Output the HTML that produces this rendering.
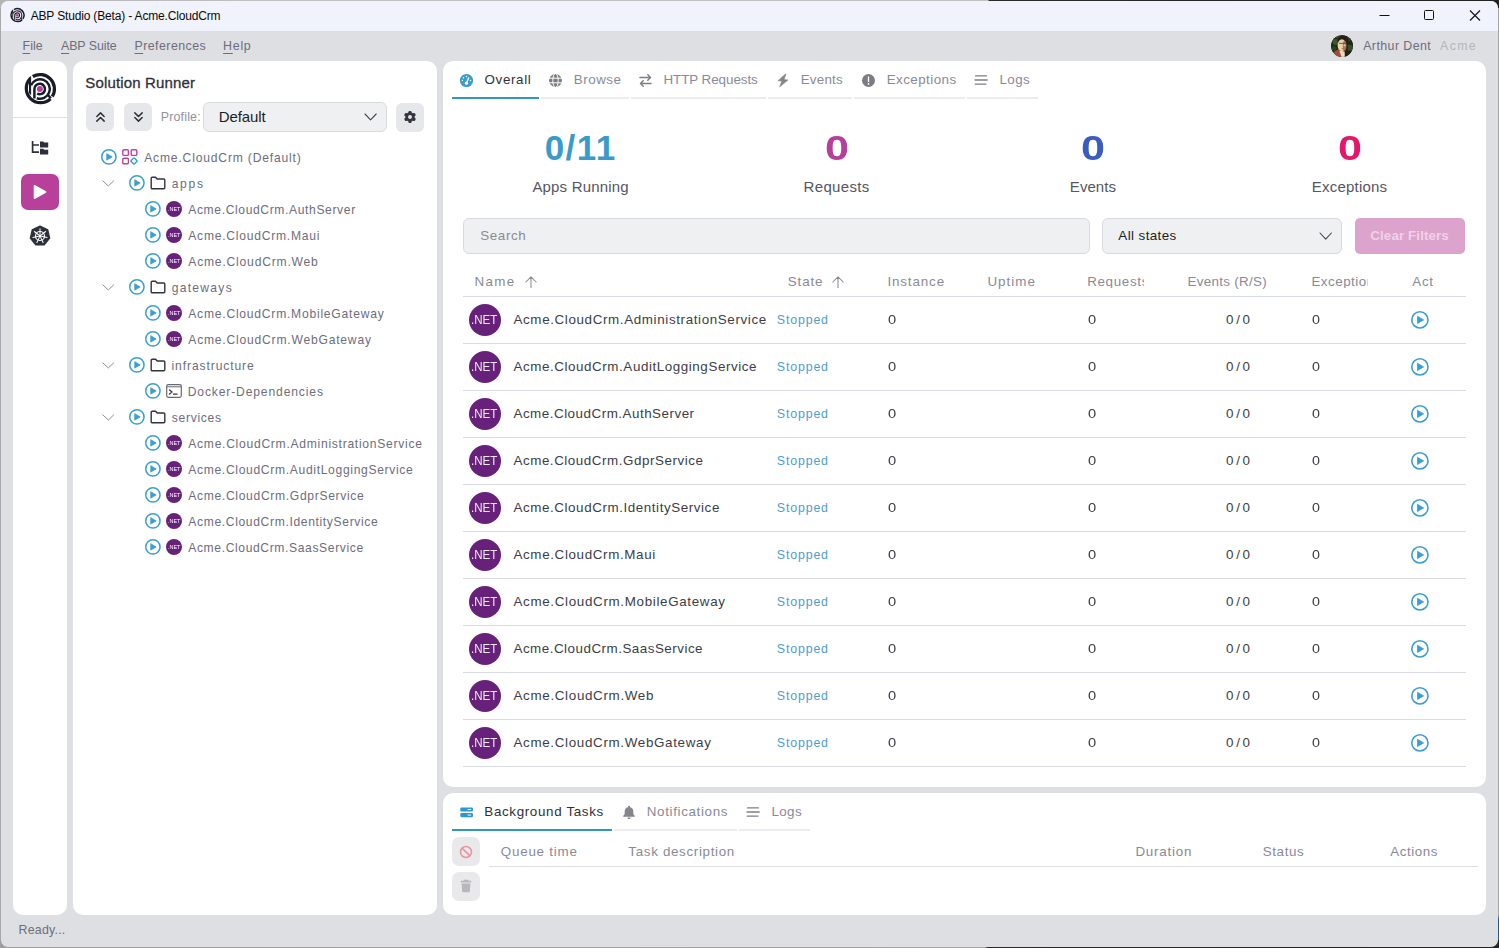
<!DOCTYPE html>
<html lang="en"><head><meta charset="utf-8"><title>ABP Studio (Beta) - Acme.CloudCrm</title>
<style>
*{box-sizing:border-box;margin:0;padding:0}
html,body{width:1499px;height:948px;overflow:hidden;background:#9c9c9f}
body{font-family:"Liberation Sans",sans-serif;color:#6d6d7c;position:relative}
.frame{position:absolute;left:0;top:0;width:1499px;height:948px;background:linear-gradient(90deg,#b4b4b6 0,#c2c2c4 20%,#c2c2c4 65.9%,#2a2a2c 66%,#222 100%) top/100% 8px no-repeat,linear-gradient(90deg,#9e9ea1 0,#a3a3a6 65.7%,#2a2a2c 65.9%,#242426 100%) bottom/100% 8px no-repeat,linear-gradient(180deg,#a5a5a8 0,#a5a5a8 96.5%,#1c5b8c 97%,#1c5b8c 99.2%,#2c2c2e 100%) right/8px 100% no-repeat,#a9a9ac}
.win{position:absolute;left:1px;top:1px;width:1497px;height:946px;background:#dedfe3;border-radius:7px;overflow:hidden}
.inner{position:absolute;left:-1px;top:-1px;width:1499px;height:948px}
.abs{position:absolute}
.t{position:absolute;white-space:nowrap;line-height:1}
.titlebar{position:absolute;left:0;top:0;width:1499px;height:31px;background:#f0f3fb}
.panel{position:absolute;background:#fff;border-radius:10px}
.menu{font-size:13px;color:#6d6d7c;letter-spacing:.3px}
.mu::first-letter{text-decoration:underline;text-underline-offset:3px;text-decoration-thickness:1px}
.tree{font-size:13px;color:#6d6d7c;letter-spacing:.24px}
.row{font-size:14px;color:#3f3f49;letter-spacing:.31px}
.th{font-size:14px;color:#8a8a97;letter-spacing:.31px}
.btn{position:absolute;background:#e6e7ea;border-radius:5px}
.sel{position:absolute;background:#eff0f2;border:1px solid #d8d9de;border-radius:6px}
.hline{position:absolute;height:1px;background:#d9dbe3}
.tab{font-size:14px;letter-spacing:.31px;color:#8a8a97}
.tabline{position:absolute;height:2px;background:#ececf0}
</style></head>
<body>
<div class="frame"></div><div class="win"><div class="inner">
<div class="titlebar"></div>
<svg class="abs" style="left:8.90px;top:6.70px" width="16.6" height="16.6" viewBox="-18 -18 36 36"><g fill="none" stroke="#1a1c27" stroke-linecap="butt"><path d="M-7.2,-12.5 A14.4,14.4 0 0 1 12.3,7.5" stroke-width="3.2"/><path d="M10.5,9.85 A14.4,14.4 0 0 1 -9.9,-10.45" stroke-width="3.2"/><path d="M7.9,6.0 L10.9,9.3" stroke-width="2.4"/><path d="M-9.0,-3.7 A9.75,9.75 0 1 1 -3.2,9.2" stroke-width="2.5"/><path d="M-5.6,9.6 V0 A5.3,5.3 0 1 1 -2.8,4.7" stroke-width="2.5"/></g><path d="M-11.0,-11.4 L-8.9,-13.1 L-8.9,6.3 L-11.0,4.0 Z" fill="#1a1c27"/><circle cx="-0.1" cy="0" r="3.0" fill="#b8409e"/></svg>
<div class="t" style="left:30.68px;top:10.10px;font-size:12px;color:#0a0a0a;letter-spacing:-0.165px;">ABP Studio (Beta) - Acme.CloudCrm</div>
<svg class="abs" style="left:1370px;top:0" width="129" height="31" viewBox="0 0 129 31"><path d="M9.5,15.5 h10" stroke="#111" stroke-width="1"/><rect x="54.5" y="10.5" width="9" height="9" rx="1" fill="none" stroke="#111" stroke-width="1"/><path d="M100,10.5 L110,20.5 M110,10.5 L100,20.5" stroke="#111" stroke-width="1.1"/></svg>
<div class="t mu" style="left:22.49px;top:40.30px;font-size:12.4px;color:#6d6d7c;letter-spacing:0.098px;">File</div>
<div class="t mu" style="left:60.97px;top:40.30px;font-size:12.4px;color:#6d6d7c;letter-spacing:-0.075px;">ABP Suite</div>
<div class="t mu" style="left:134.49px;top:40.30px;font-size:12.4px;color:#6d6d7c;letter-spacing:0.447px;">Preferences</div>
<div class="t mu" style="left:223.09px;top:40.30px;font-size:12.4px;color:#6d6d7c;letter-spacing:0.725px;">Help</div>
<svg class="abs" style="left:1330px;top:34px" width="24" height="24" viewBox="-12.05 -12.05 24 24"><defs><clipPath id="avc"><circle r="10.9"/></clipPath><filter id="avb" x="-20%" y="-20%" width="140%" height="140%"><feGaussianBlur stdDeviation="0.55"/></filter></defs><circle r="10.9" fill="#1f2b16"/><g clip-path="url(#avc)"><g filter="url(#avb)"><rect x="-12" y="-12" width="24" height="24" fill="#1d2914"/><circle cx="-6.5" cy="-4" r="3" fill="#3a5a2c"/><circle cx="7.5" cy="2" r="3.4" fill="#34502a"/><circle cx="-3.5" cy="-9" r="2.4" fill="#35522a"/><circle cx="6" cy="-7" r="2.5" fill="#2c4522"/><circle cx="-8" cy="2.5" r="2.5" fill="#2a4020"/><ellipse cx="0.8" cy="-5.6" rx="5.6" ry="4.8" fill="#2b1d15"/><path d="M4,-4 Q6.5,0 5.5,6 L3,6 Z" fill="#2b1d15"/><path d="M3,5 L9,4.5 L9,12 L2.5,12 Z" fill="#2a1c1a"/><path d="M-10,7 L-3.2,3 L0,12 L-8,12 Z" fill="#a5483a"/><path d="M-2.8,4.5 L2.6,5.5 L2.8,12 L-0.3,12 Z" fill="#e8dcb8"/><ellipse cx="-0.2" cy="-0.9" rx="4.2" ry="6" fill="#e6d2ab"/><ellipse cx="2.6" cy="-0.2" rx="1.9" ry="5.2" fill="#9a6a52" opacity=".85"/><ellipse cx="2.6" cy="-0.8" rx="0.9" ry="1.2" fill="#e0b9a0"/><path d="M-3,-2.7 H4" stroke="#6a4632" stroke-width="0.9"/><ellipse cx="0.6" cy="2.5" rx="1.1" ry="0.6" fill="#c4624c"/></g></g></svg>
<div class="t" style="left:1363.17px;top:40.30px;font-size:12.4px;color:#6d6d7c;letter-spacing:0.425px;">Arthur Dent</div>
<div class="t" style="left:1440.07px;top:40.30px;font-size:12.4px;color:#b4b5be;letter-spacing:1.305px;">Acme</div>
<div class="panel" style="left:13px;top:61px;width:54px;height:854px"></div>
<div class="hline" style="left:13px;top:117px;width:54px;background:#dcdde3"></div>
<svg class="abs" style="left:22.04px;top:70.90px" width="36" height="36" viewBox="-18 -18 36 36"><g fill="none" stroke="#1a1c27" stroke-linecap="butt"><path d="M-7.2,-12.5 A14.4,14.4 0 0 1 12.3,7.5" stroke-width="3.2"/><path d="M10.5,9.85 A14.4,14.4 0 0 1 -9.9,-10.45" stroke-width="3.2"/><path d="M7.9,6.0 L10.9,9.3" stroke-width="2.4"/><path d="M-9.0,-3.7 A9.75,9.75 0 1 1 -3.2,9.2" stroke-width="2.5"/><path d="M-5.6,9.6 V0 A5.3,5.3 0 1 1 -2.8,4.7" stroke-width="2.5"/></g><path d="M-11.0,-11.4 L-8.9,-13.1 L-8.9,6.3 L-11.0,4.0 Z" fill="#1a1c27"/><circle cx="-0.1" cy="0" r="3.0" fill="#b8409e"/></svg>
<svg class="abs" style="left:31px;top:140px" width="18" height="16" viewBox="0 0 18 16"><path d="M1.6,1 V12.2 H8 M1.6,5 H8" fill="none" stroke="#2d2f3a" stroke-width="1.7"/><path d="M9,1.6 h3.2 l1,1 h4 v4.8 h-8.2 z" fill="#2d2f3a"/><path d="M9,8.8 h3.2 l1,1 h4 v4.8 h-8.2 z" fill="#2d2f3a"/></svg>
<div class="abs" style="left:21px;top:174px;width:38px;height:36px;border-radius:7px;background:#b8409a"></div>
<svg class="abs" style="left:33px;top:184px" width="14" height="16" viewBox="0 0 14 16"><path d="M1.5,1.8 L12.5,8 L1.5,14.2 Z" fill="#fff" stroke="#fff" stroke-width="1.6" stroke-linejoin="round"/></svg>
<svg class="abs" style="left:29px;top:225px" width="22" height="22" viewBox="-11 -11 22 22"><path d="M0,-10 L7.8,-6.2 L9.7,2.2 L4.3,9 L-4.3,9 L-9.7,2.2 L-7.8,-6.2 Z" fill="#2d303b" stroke="#2d303b" stroke-width="1.2" stroke-linejoin="round"/><circle r="4.5" fill="none" stroke="#fff" stroke-width="1.2"/><g stroke="#fff" stroke-width="1" stroke-linecap="round"><path d="M0,-1.6 V-7.2" transform="rotate(0.0)"/><path d="M0,-1.6 V-7.2" transform="rotate(51.4)"/><path d="M0,-1.6 V-7.2" transform="rotate(102.9)"/><path d="M0,-1.6 V-7.2" transform="rotate(154.3)"/><path d="M0,-1.6 V-7.2" transform="rotate(205.7)"/><path d="M0,-1.6 V-7.2" transform="rotate(257.1)"/><path d="M0,-1.6 V-7.2" transform="rotate(308.6)"/></g><circle r="1.3" fill="#fff"/></svg>
<div class="panel" style="left:73px;top:61px;width:364px;height:854px"></div>
<div class="t" style="left:85.32px;top:74.90px;font-size:15px;color:#2f3039;letter-spacing:0.150px;-webkit-text-stroke:0.3px #2f3039;">Solution Runner</div>
<div class="btn" style="left:85.5px;top:102.6px;width:28.8px;height:28.8px;border-radius:6px"></div>
<div class="btn" style="left:123.6px;top:102.6px;width:28.8px;height:28.8px;border-radius:6px"></div>
<svg class="abs" style="left:94.9px;top:110.7px" width="11" height="12" viewBox="0 0 12 13"><path d="M2,6 L6,2 L10,6 M2,11 L6,7 L10,11" fill="none" stroke="#2d2f3a" stroke-width="1.6" stroke-linecap="round" stroke-linejoin="round"/></svg>
<svg class="abs" style="left:132.8px;top:111.1px" width="11" height="12" viewBox="0 0 12 13"><path d="M2,2 L6,6 L10,2 M2,7 L6,11 L10,7" fill="none" stroke="#2d2f3a" stroke-width="1.6" stroke-linecap="round" stroke-linejoin="round"/></svg>
<div class="t" style="left:160.69px;top:111.20px;font-size:12.4px;color:#92929d;letter-spacing:0.194px;">Profile:</div>
<div class="sel" style="left:203px;top:102px;width:184px;height:29.5px"></div>
<div class="t" style="left:218.70px;top:108.50px;font-size:15px;color:#1d1d25;letter-spacing:-0.109px;">Default</div>
<svg class="abs" style="left:364.29999999999995px;top:112.75px" width="13.2" height="7.9" viewBox="-1 -1 13.2 7.9"><path d="M0,0 L5.6,5.9 L11.2,0" fill="none" stroke="#45464f" stroke-width="1.1" stroke-linecap="round" stroke-linejoin="round"/></svg>
<div class="btn" style="left:395.6px;top:102.5px;width:28.8px;height:29px;border-radius:6px"></div>
<svg class="abs" style="left:402.9px;top:110px" width="14" height="14" viewBox="-7 -7 14 14"><g fill="#33353f"><rect x="-1.6" y="-6.1" width="3.2" height="3.4" rx="1.1" transform="rotate(0)"/><rect x="-1.6" y="-6.1" width="3.2" height="3.4" rx="1.1" transform="rotate(60)"/><rect x="-1.6" y="-6.1" width="3.2" height="3.4" rx="1.1" transform="rotate(120)"/><rect x="-1.6" y="-6.1" width="3.2" height="3.4" rx="1.1" transform="rotate(180)"/><rect x="-1.6" y="-6.1" width="3.2" height="3.4" rx="1.1" transform="rotate(240)"/><rect x="-1.6" y="-6.1" width="3.2" height="3.4" rx="1.1" transform="rotate(300)"/></g><circle r="3.3" fill="none" stroke="#33353f" stroke-width="2.7"/></svg>
<svg class="abs" style="left:99.90px;top:148.10px" width="17.80" height="17.80" viewBox="-8.90 -8.90 17.80 17.80"><circle r="7.15" fill="none" stroke="#3a9fd0" stroke-width="1.5"/><path d="M-2.15,-3.20 L3.30,0 L-2.15,3.20 Z" fill="#3a9fd0" stroke="#3a9fd0" stroke-width="0.8" stroke-linejoin="round"/></svg>
<svg class="abs" style="left:122px;top:149px" width="16" height="16" viewBox="0 0 16 16"><rect x="0.8" y="0.8" width="5.6" height="5.6" rx="1" fill="none" stroke="#c2409f" stroke-width="1.4"/><rect x="9.2" y="0.8" width="5.6" height="5.6" rx="1" fill="none" stroke="#c2409f" stroke-width="1.4"/><rect x="0.8" y="9.2" width="5.6" height="5.6" rx="1" fill="none" stroke="#c2409f" stroke-width="1.4"/><rect x="9.6" y="9.6" width="4.8" height="4.8" rx="0.8" transform="rotate(45 12 12)" fill="none" stroke="#3a9fd0" stroke-width="1.4"/></svg>
<div class="t" style="left:144.17px;top:151.50px;font-size:12.1px;color:#6d6d7c;letter-spacing:0.829px;">Acme.CloudCrm (Default)</div>
<svg class="abs" style="left:101.60000000000001px;top:179.7px" width="12.6" height="7.0" viewBox="-1 -1 12.6 7.0"><path d="M0,0 L5.3,5.0 L10.6,0" fill="none" stroke="#8e8e96" stroke-width="1.0" stroke-linecap="round" stroke-linejoin="round"/></svg>
<svg class="abs" style="left:128.00px;top:174.10px" width="17.80" height="17.80" viewBox="-8.90 -8.90 17.80 17.80"><circle r="7.15" fill="none" stroke="#3a9fd0" stroke-width="1.5"/><path d="M-2.15,-3.20 L3.30,0 L-2.15,3.20 Z" fill="#3a9fd0" stroke="#3a9fd0" stroke-width="0.8" stroke-linejoin="round"/></svg>
<svg class="abs" style="left:149.9px;top:176.1px" width="16" height="14" viewBox="0 0 16 14"><path d="M1.2,2.2 a1,1 0 0 1 1,-1 h3.4 l1.6,1.8 h6.6 a1,1 0 0 1 1,1 v7.8 a1,1 0 0 1 -1,1 h-11.6 a1,1 0 0 1 -1,-1 z" fill="none" stroke="#33333b" stroke-width="1.4" stroke-linejoin="round"/></svg>
<div class="t" style="left:171.66px;top:177.50px;font-size:12.1px;color:#6d6d7c;letter-spacing:1.695px;">apps</div>
<svg class="abs" style="left:144.10px;top:200.10px" width="17.80" height="17.80" viewBox="-8.90 -8.90 17.80 17.80"><circle r="7.15" fill="none" stroke="#3a9fd0" stroke-width="1.5"/><path d="M-2.15,-3.20 L3.30,0 L-2.15,3.20 Z" fill="#3a9fd0" stroke="#3a9fd0" stroke-width="0.8" stroke-linejoin="round"/></svg>
<div class="abs" style="left:166px;top:201px;width:16px;height:16px;border-radius:50%;background:#68217a"></div>
<div class="t" style="left:167.67px;top:206.85px;font-size:5.9px;color:#fff;letter-spacing:0.000px;transform:scaleX(0.926);transform-origin:0 50%;">.NET</div>

<div class="t" style="left:188.27px;top:203.50px;font-size:12.1px;color:#6d6d7c;letter-spacing:0.623px;">Acme.CloudCrm.AuthServer</div>
<svg class="abs" style="left:144.10px;top:226.10px" width="17.80" height="17.80" viewBox="-8.90 -8.90 17.80 17.80"><circle r="7.15" fill="none" stroke="#3a9fd0" stroke-width="1.5"/><path d="M-2.15,-3.20 L3.30,0 L-2.15,3.20 Z" fill="#3a9fd0" stroke="#3a9fd0" stroke-width="0.8" stroke-linejoin="round"/></svg>
<div class="abs" style="left:166px;top:227px;width:16px;height:16px;border-radius:50%;background:#68217a"></div>
<div class="t" style="left:167.67px;top:232.85px;font-size:5.9px;color:#fff;letter-spacing:0.000px;transform:scaleX(0.926);transform-origin:0 50%;">.NET</div>

<div class="t" style="left:188.27px;top:229.50px;font-size:12.1px;color:#6d6d7c;letter-spacing:0.759px;">Acme.CloudCrm.Maui</div>
<svg class="abs" style="left:144.10px;top:252.10px" width="17.80" height="17.80" viewBox="-8.90 -8.90 17.80 17.80"><circle r="7.15" fill="none" stroke="#3a9fd0" stroke-width="1.5"/><path d="M-2.15,-3.20 L3.30,0 L-2.15,3.20 Z" fill="#3a9fd0" stroke="#3a9fd0" stroke-width="0.8" stroke-linejoin="round"/></svg>
<div class="abs" style="left:166px;top:253px;width:16px;height:16px;border-radius:50%;background:#68217a"></div>
<div class="t" style="left:167.67px;top:258.85px;font-size:5.9px;color:#fff;letter-spacing:0.000px;transform:scaleX(0.926);transform-origin:0 50%;">.NET</div>

<div class="t" style="left:188.27px;top:255.50px;font-size:12.1px;color:#6d6d7c;letter-spacing:0.804px;">Acme.CloudCrm.Web</div>
<svg class="abs" style="left:101.60000000000001px;top:283.7px" width="12.6" height="7.0" viewBox="-1 -1 12.6 7.0"><path d="M0,0 L5.3,5.0 L10.6,0" fill="none" stroke="#8e8e96" stroke-width="1.0" stroke-linecap="round" stroke-linejoin="round"/></svg>
<svg class="abs" style="left:128.00px;top:278.10px" width="17.80" height="17.80" viewBox="-8.90 -8.90 17.80 17.80"><circle r="7.15" fill="none" stroke="#3a9fd0" stroke-width="1.5"/><path d="M-2.15,-3.20 L3.30,0 L-2.15,3.20 Z" fill="#3a9fd0" stroke="#3a9fd0" stroke-width="0.8" stroke-linejoin="round"/></svg>
<svg class="abs" style="left:149.9px;top:280.1px" width="16" height="14" viewBox="0 0 16 14"><path d="M1.2,2.2 a1,1 0 0 1 1,-1 h3.4 l1.6,1.8 h6.6 a1,1 0 0 1 1,1 v7.8 a1,1 0 0 1 -1,1 h-11.6 a1,1 0 0 1 -1,-1 z" fill="none" stroke="#33333b" stroke-width="1.4" stroke-linejoin="round"/></svg>
<div class="t" style="left:171.67px;top:281.50px;font-size:12.1px;color:#6d6d7c;letter-spacing:1.280px;">gateways</div>
<svg class="abs" style="left:144.10px;top:304.10px" width="17.80" height="17.80" viewBox="-8.90 -8.90 17.80 17.80"><circle r="7.15" fill="none" stroke="#3a9fd0" stroke-width="1.5"/><path d="M-2.15,-3.20 L3.30,0 L-2.15,3.20 Z" fill="#3a9fd0" stroke="#3a9fd0" stroke-width="0.8" stroke-linejoin="round"/></svg>
<div class="abs" style="left:166px;top:305px;width:16px;height:16px;border-radius:50%;background:#68217a"></div>
<div class="t" style="left:167.67px;top:310.85px;font-size:5.9px;color:#fff;letter-spacing:0.000px;transform:scaleX(0.926);transform-origin:0 50%;">.NET</div>

<div class="t" style="left:188.27px;top:307.50px;font-size:12.1px;color:#6d6d7c;letter-spacing:0.769px;">Acme.CloudCrm.MobileGateway</div>
<svg class="abs" style="left:144.10px;top:330.10px" width="17.80" height="17.80" viewBox="-8.90 -8.90 17.80 17.80"><circle r="7.15" fill="none" stroke="#3a9fd0" stroke-width="1.5"/><path d="M-2.15,-3.20 L3.30,0 L-2.15,3.20 Z" fill="#3a9fd0" stroke="#3a9fd0" stroke-width="0.8" stroke-linejoin="round"/></svg>
<div class="abs" style="left:166px;top:331px;width:16px;height:16px;border-radius:50%;background:#68217a"></div>
<div class="t" style="left:167.67px;top:336.85px;font-size:5.9px;color:#fff;letter-spacing:0.000px;transform:scaleX(0.926);transform-origin:0 50%;">.NET</div>

<div class="t" style="left:188.27px;top:333.50px;font-size:12.1px;color:#6d6d7c;letter-spacing:0.794px;">Acme.CloudCrm.WebGateway</div>
<svg class="abs" style="left:101.60000000000001px;top:361.7px" width="12.6" height="7.0" viewBox="-1 -1 12.6 7.0"><path d="M0,0 L5.3,5.0 L10.6,0" fill="none" stroke="#8e8e96" stroke-width="1.0" stroke-linecap="round" stroke-linejoin="round"/></svg>
<svg class="abs" style="left:128.00px;top:356.10px" width="17.80" height="17.80" viewBox="-8.90 -8.90 17.80 17.80"><circle r="7.15" fill="none" stroke="#3a9fd0" stroke-width="1.5"/><path d="M-2.15,-3.20 L3.30,0 L-2.15,3.20 Z" fill="#3a9fd0" stroke="#3a9fd0" stroke-width="0.8" stroke-linejoin="round"/></svg>
<svg class="abs" style="left:149.9px;top:358.1px" width="16" height="14" viewBox="0 0 16 14"><path d="M1.2,2.2 a1,1 0 0 1 1,-1 h3.4 l1.6,1.8 h6.6 a1,1 0 0 1 1,1 v7.8 a1,1 0 0 1 -1,1 h-11.6 a1,1 0 0 1 -1,-1 z" fill="none" stroke="#33333b" stroke-width="1.4" stroke-linejoin="round"/></svg>
<div class="t" style="left:171.50px;top:359.50px;font-size:12.1px;color:#6d6d7c;letter-spacing:0.898px;">infrastructure</div>
<svg class="abs" style="left:144.10px;top:382.10px" width="17.80" height="17.80" viewBox="-8.90 -8.90 17.80 17.80"><circle r="7.15" fill="none" stroke="#3a9fd0" stroke-width="1.5"/><path d="M-2.15,-3.20 L3.30,0 L-2.15,3.20 Z" fill="#3a9fd0" stroke="#3a9fd0" stroke-width="0.8" stroke-linejoin="round"/></svg>
<svg class="abs" style="left:166px;top:383.8px" width="16" height="14" viewBox="0 0 16 14"><rect x="0.7" y="0.7" width="14.6" height="12.6" rx="1.5" fill="none" stroke="#6a6a72" stroke-width="1.2"/><path d="M0.7,2.8 h14.6" stroke="#6a6a72" stroke-width="1"/><path d="M3.5,6 L6,8 L3.5,10" fill="none" stroke="#33333b" stroke-width="1.3" stroke-linecap="round" stroke-linejoin="round"/><path d="M7.5,10.2 h3.5" stroke="#33333b" stroke-width="1.3" stroke-linecap="round"/></svg>
<div class="t" style="left:187.71px;top:385.50px;font-size:12.1px;color:#6d6d7c;letter-spacing:0.865px;">Docker-Dependencies</div>
<svg class="abs" style="left:101.60000000000001px;top:413.7px" width="12.6" height="7.0" viewBox="-1 -1 12.6 7.0"><path d="M0,0 L5.3,5.0 L10.6,0" fill="none" stroke="#8e8e96" stroke-width="1.0" stroke-linecap="round" stroke-linejoin="round"/></svg>
<svg class="abs" style="left:128.00px;top:408.10px" width="17.80" height="17.80" viewBox="-8.90 -8.90 17.80 17.80"><circle r="7.15" fill="none" stroke="#3a9fd0" stroke-width="1.5"/><path d="M-2.15,-3.20 L3.30,0 L-2.15,3.20 Z" fill="#3a9fd0" stroke="#3a9fd0" stroke-width="0.8" stroke-linejoin="round"/></svg>
<svg class="abs" style="left:149.9px;top:410.1px" width="16" height="14" viewBox="0 0 16 14"><path d="M1.2,2.2 a1,1 0 0 1 1,-1 h3.4 l1.6,1.8 h6.6 a1,1 0 0 1 1,1 v7.8 a1,1 0 0 1 -1,1 h-11.6 a1,1 0 0 1 -1,-1 z" fill="none" stroke="#33333b" stroke-width="1.4" stroke-linejoin="round"/></svg>
<div class="t" style="left:171.66px;top:411.50px;font-size:12.1px;color:#6d6d7c;letter-spacing:0.727px;">services</div>
<svg class="abs" style="left:144.10px;top:434.10px" width="17.80" height="17.80" viewBox="-8.90 -8.90 17.80 17.80"><circle r="7.15" fill="none" stroke="#3a9fd0" stroke-width="1.5"/><path d="M-2.15,-3.20 L3.30,0 L-2.15,3.20 Z" fill="#3a9fd0" stroke="#3a9fd0" stroke-width="0.8" stroke-linejoin="round"/></svg>
<div class="abs" style="left:166px;top:435px;width:16px;height:16px;border-radius:50%;background:#68217a"></div>
<div class="t" style="left:167.67px;top:440.85px;font-size:5.9px;color:#fff;letter-spacing:0.000px;transform:scaleX(0.926);transform-origin:0 50%;">.NET</div>

<div class="t" style="left:188.27px;top:437.50px;font-size:12.1px;color:#6d6d7c;letter-spacing:0.725px;">Acme.CloudCrm.AdministrationService</div>
<svg class="abs" style="left:144.10px;top:460.10px" width="17.80" height="17.80" viewBox="-8.90 -8.90 17.80 17.80"><circle r="7.15" fill="none" stroke="#3a9fd0" stroke-width="1.5"/><path d="M-2.15,-3.20 L3.30,0 L-2.15,3.20 Z" fill="#3a9fd0" stroke="#3a9fd0" stroke-width="0.8" stroke-linejoin="round"/></svg>
<div class="abs" style="left:166px;top:461px;width:16px;height:16px;border-radius:50%;background:#68217a"></div>
<div class="t" style="left:167.67px;top:466.85px;font-size:5.9px;color:#fff;letter-spacing:0.000px;transform:scaleX(0.926);transform-origin:0 50%;">.NET</div>

<div class="t" style="left:188.27px;top:463.50px;font-size:12.1px;color:#6d6d7c;letter-spacing:0.673px;">Acme.CloudCrm.AuditLoggingService</div>
<svg class="abs" style="left:144.10px;top:486.10px" width="17.80" height="17.80" viewBox="-8.90 -8.90 17.80 17.80"><circle r="7.15" fill="none" stroke="#3a9fd0" stroke-width="1.5"/><path d="M-2.15,-3.20 L3.30,0 L-2.15,3.20 Z" fill="#3a9fd0" stroke="#3a9fd0" stroke-width="0.8" stroke-linejoin="round"/></svg>
<div class="abs" style="left:166px;top:487px;width:16px;height:16px;border-radius:50%;background:#68217a"></div>
<div class="t" style="left:167.67px;top:492.85px;font-size:5.9px;color:#fff;letter-spacing:0.000px;transform:scaleX(0.926);transform-origin:0 50%;">.NET</div>

<div class="t" style="left:188.27px;top:489.50px;font-size:12.1px;color:#6d6d7c;letter-spacing:0.676px;">Acme.CloudCrm.GdprService</div>
<svg class="abs" style="left:144.10px;top:512.10px" width="17.80" height="17.80" viewBox="-8.90 -8.90 17.80 17.80"><circle r="7.15" fill="none" stroke="#3a9fd0" stroke-width="1.5"/><path d="M-2.15,-3.20 L3.30,0 L-2.15,3.20 Z" fill="#3a9fd0" stroke="#3a9fd0" stroke-width="0.8" stroke-linejoin="round"/></svg>
<div class="abs" style="left:166px;top:513px;width:16px;height:16px;border-radius:50%;background:#68217a"></div>
<div class="t" style="left:167.67px;top:518.85px;font-size:5.9px;color:#fff;letter-spacing:0.000px;transform:scaleX(0.926);transform-origin:0 50%;">.NET</div>

<div class="t" style="left:188.27px;top:515.50px;font-size:12.1px;color:#6d6d7c;letter-spacing:0.647px;">Acme.CloudCrm.IdentityService</div>
<svg class="abs" style="left:144.10px;top:538.10px" width="17.80" height="17.80" viewBox="-8.90 -8.90 17.80 17.80"><circle r="7.15" fill="none" stroke="#3a9fd0" stroke-width="1.5"/><path d="M-2.15,-3.20 L3.30,0 L-2.15,3.20 Z" fill="#3a9fd0" stroke="#3a9fd0" stroke-width="0.8" stroke-linejoin="round"/></svg>
<div class="abs" style="left:166px;top:539px;width:16px;height:16px;border-radius:50%;background:#68217a"></div>
<div class="t" style="left:167.67px;top:544.85px;font-size:5.9px;color:#fff;letter-spacing:0.000px;transform:scaleX(0.926);transform-origin:0 50%;">.NET</div>

<div class="t" style="left:188.27px;top:541.50px;font-size:12.1px;color:#6d6d7c;letter-spacing:0.623px;">Acme.CloudCrm.SaasService</div>
<div class="panel" style="left:443px;top:61px;width:1043px;height:726px"></div>
<div class="tabline" style="left:452px;top:97px;width:87px;background:#2f97cc"></div>
<div class="t" style="left:484.52px;top:73.00px;font-size:13.4px;color:#2f3039;letter-spacing:0.646px;">Overall</div>
<div class="tabline" style="left:541px;top:97px;width:88px;"></div>
<div class="t" style="left:573.81px;top:73.00px;font-size:13.4px;color:#8a8a97;letter-spacing:0.515px;">Browse</div>
<div class="tabline" style="left:631px;top:97px;width:135px;"></div>
<div class="t" style="left:663.51px;top:73.00px;font-size:13.4px;color:#8a8a97;letter-spacing:-0.064px;">HTTP Requests</div>
<div class="tabline" style="left:768px;top:97px;width:84px;"></div>
<div class="t" style="left:800.71px;top:73.00px;font-size:13.4px;color:#8a8a97;letter-spacing:0.207px;">Events</div>
<div class="tabline" style="left:854px;top:97px;width:111px;"></div>
<div class="t" style="left:886.71px;top:73.00px;font-size:13.4px;color:#8a8a97;letter-spacing:0.440px;">Exceptions</div>
<div class="tabline" style="left:967px;top:97px;width:71px;"></div>
<div class="t" style="left:999.51px;top:73.00px;font-size:13.4px;color:#8a8a97;letter-spacing:0.412px;">Logs</div>
<svg class="abs" style="left:459px;top:72.9px" width="15" height="15" viewBox="-7.5 -7.5 15 15"><circle r="6.6" fill="#3a9dcd"/><path d="M0,2.7 L2.1,-2.6" stroke="#fff" stroke-width="1.3" stroke-linecap="round"/><circle cx="-0.05" cy="2.7" r="1.6" fill="#fff"/><circle cx="-4.1" cy="0.1" r="0.75" fill="#fff"/><circle cx="-3" cy="-2.85" r="0.75" fill="#fff"/><circle cx="0" cy="-3.9" r="0.75" fill="#fff"/><circle cx="4" cy="0.1" r="0.75" fill="#fff"/></svg>
<svg class="abs" style="left:548px;top:73px" width="15" height="15" viewBox="-7.5 -7.5 15 15"><circle r="6.5" fill="#7b7d83"/><g stroke="#fff" stroke-width="1" fill="none"><ellipse rx="2.7" ry="7"/><path d="M-6.5,-2.3 H6.5 M-6.5,2.3 H6.5"/></g></svg>
<svg class="abs" style="left:638px;top:73px" width="15" height="15" viewBox="0 0 15 15"><g fill="none" stroke="#7e7f88" stroke-width="1.5" stroke-linecap="round" stroke-linejoin="round"><path d="M2,4.5 H12.5 M9.8,1.8 L12.5,4.5 L9.8,7.2"/><path d="M13,10.5 H2.5 M5.2,7.8 L2.5,10.5 L5.2,13.2"/></g></svg>
<svg class="abs" style="left:776px;top:73px" width="13" height="15" viewBox="0 0 13 15"><path d="M9.5,1.1 L2,7.7 L5.8,8.1 L3.6,13.9 L11.9,7 L8,6.6 L10,1.1 Z" fill="#84868b" stroke="#84868b" stroke-width="0.6" stroke-linejoin="round"/></svg>
<svg class="abs" style="left:861px;top:73px" width="15" height="15" viewBox="-7.5 -7.5 15 15"><circle r="6.5" fill="#7b7d83"/><path d="M0,-3.5 V0.9" stroke="#fff" stroke-width="1.3" stroke-linecap="round"/><circle cy="3.4" r="0.85" fill="#fff"/></svg>
<svg class="abs" style="left:974.2px;top:74.4px" width="14" height="12" viewBox="0 0 14 12"><g stroke="#7e7f88" stroke-width="1.4" stroke-linecap="round"><path d="M1.6,1.9 H12.4 M1,6 H13.2 M1.2,10.1 H12"/></g></svg>
<div class="t" style="left:544.70px;top:129.50px;font-size:35px;color:#3a9bcb;letter-spacing:1.438px;font-weight:700;">0/11</div>
<div class="t" style="left:532.38px;top:179.00px;font-size:15px;color:#55565f;letter-spacing:0.179px;">Apps Running</div>
<div class="t" style="left:824.67px;top:129.50px;font-size:35px;color:#b5409c;letter-spacing:0.000px;font-weight:700;transform:scaleX(1.231);transform-origin:0 50%;">0</div>
<div class="t" style="left:803.60px;top:179.00px;font-size:15px;color:#55565f;letter-spacing:0.327px;">Requests</div>
<div class="t" style="left:1081.17px;top:129.50px;font-size:35px;color:#3b5cc0;letter-spacing:0.000px;font-weight:700;transform:scaleX(1.231);transform-origin:0 50%;">0</div>
<div class="t" style="left:1069.85px;top:179.00px;font-size:15px;color:#55565f;letter-spacing:0.036px;">Events</div>
<div class="t" style="left:1337.67px;top:129.50px;font-size:35px;color:#e3176b;letter-spacing:0.000px;font-weight:700;transform:scaleX(1.231);transform-origin:0 50%;">0</div>
<div class="t" style="left:1311.75px;top:179.00px;font-size:15px;color:#55565f;letter-spacing:0.221px;">Exceptions</div>
<div class="sel" style="left:463px;top:218px;width:627px;height:36px"></div>
<div class="t" style="left:480.16px;top:228.90px;font-size:13.4px;color:#8a8a97;letter-spacing:0.637px;">Search</div>
<div class="sel" style="left:1102px;top:218px;width:240px;height:36px"></div>
<div class="t" style="left:1118.37px;top:228.90px;font-size:13.4px;color:#1d1d25;letter-spacing:0.399px;">All states</div>
<svg class="abs" style="left:1319.2px;top:231.9px" width="13.4" height="8.2" viewBox="-1 -1 13.4 8.2"><path d="M0,0 L5.7,6.2 L11.4,0" fill="none" stroke="#45464f" stroke-width="1.1" stroke-linecap="round" stroke-linejoin="round"/></svg>
<div class="abs" style="left:1354.7px;top:217.6px;width:110.7px;height:36.6px;border-radius:5px;background:#dca3cd"></div>
<div class="t" style="left:1370.31px;top:229.00px;font-size:13.4px;color:#efd2e8;letter-spacing:0.091px;font-weight:700;">Clear Filters</div>
<div class="t" style="left:474.49px;top:274.80px;font-size:13.4px;color:#8a8a97;letter-spacing:1.365px;">Name</div>
<svg class="abs" style="left:524.6px;top:275.8px" width="12" height="12" viewBox="0 0 12 12"><path d="M6,11.6 V0.9 M0.8,6 L6,0.8 L11.2,6" fill="none" stroke="#8a8a97" stroke-width="1.05" stroke-linecap="round" stroke-linejoin="round"/></svg>
<div class="t" style="left:787.86px;top:274.80px;font-size:13.4px;color:#8a8a97;letter-spacing:0.824px;">State</div>
<svg class="abs" style="left:831.5px;top:275.8px" width="12" height="12" viewBox="0 0 12 12"><path d="M6,11.6 V0.9 M0.8,6 L6,0.8 L11.2,6" fill="none" stroke="#8a8a97" stroke-width="1.05" stroke-linecap="round" stroke-linejoin="round"/></svg>
<div class="t" style="left:887.40px;top:274.80px;font-size:13.4px;color:#8a8a97;letter-spacing:0.869px;">Instance</div>
<div class="t" style="left:987.40px;top:274.80px;font-size:13.4px;color:#8a8a97;letter-spacing:1.019px;">Uptime</div>
<div class="t" style="left:1087.21px;top:274.80px;font-size:13.4px;color:#8a8a97;letter-spacing:0.651px;width:56.79px;overflow:hidden;">Requests</div>
<div class="t" style="left:1187.41px;top:274.80px;font-size:13.4px;color:#8a8a97;letter-spacing:0.312px;">Events (R/S)</div>
<div class="t" style="left:1311.41px;top:274.80px;font-size:13.4px;color:#8a8a97;letter-spacing:0.495px;width:56.79px;overflow:hidden;">Exceptions</div>
<div class="t" style="left:1412.37px;top:274.80px;font-size:13.4px;color:#8a8a97;letter-spacing:0.662px;width:21.13px;overflow:hidden;">Actions</div>
<div class="hline" style="left:463px;top:296px;width:1003px"></div>
<div class="abs" style="left:468.90px;top:303.70px;width:32.2px;height:32.2px;border-radius:50%;background:#68217a"></div>
<div class="t" style="left:470.55px;top:313.40px;font-size:13.6px;color:rgba(255,255,255,.9);letter-spacing:0.000px;transform:scaleX(0.853);transform-origin:0 50%;">.NET</div>

<div class="t" style="left:513.47px;top:313.00px;font-size:13.4px;color:#3c3d47;letter-spacing:0.627px;">Acme.CloudCrm.AdministrationService</div>
<div class="t" style="left:776.80px;top:314.20px;font-size:12.4px;color:#4f9dcf;letter-spacing:0.842px;">Stopped</div>
<div class="t" style="left:887.86px;top:313.00px;font-size:13.4px;color:#3c3d47;letter-spacing:0.000px;transform:scaleX(1.097);transform-origin:0 50%;">0</div>
<div class="t" style="left:1087.86px;top:313.00px;font-size:13.4px;color:#3c3d47;letter-spacing:0.000px;transform:scaleX(1.097);transform-origin:0 50%;">0</div>
<div class="t" style="left:1226.11px;top:313.00px;font-size:13.4px;color:#3c3d47;letter-spacing:2.669px;">0/0</div>
<div class="t" style="left:1312.08px;top:313.00px;font-size:13.4px;color:#3c3d47;letter-spacing:0.000px;transform:scaleX(1.067);transform-origin:0 50%;">0</div>
<svg class="abs" style="left:1410.20px;top:309.90px" width="19.80" height="19.80" viewBox="-9.90 -9.90 19.80 19.80"><circle r="8.10" fill="none" stroke="#3a9fd0" stroke-width="1.6"/><path d="M-2.42,-3.61 L3.72,0 L-2.42,3.61 Z" fill="#3a9fd0" stroke="#3a9fd0" stroke-width="0.8" stroke-linejoin="round"/></svg>
<div class="hline" style="left:463px;top:343px;width:1003px"></div>
<div class="abs" style="left:468.90px;top:350.70px;width:32.2px;height:32.2px;border-radius:50%;background:#68217a"></div>
<div class="t" style="left:470.55px;top:360.40px;font-size:13.6px;color:rgba(255,255,255,.9);letter-spacing:0.000px;transform:scaleX(0.853);transform-origin:0 50%;">.NET</div>

<div class="t" style="left:513.47px;top:360.00px;font-size:13.4px;color:#3c3d47;letter-spacing:0.569px;">Acme.CloudCrm.AuditLoggingService</div>
<div class="t" style="left:776.80px;top:361.20px;font-size:12.4px;color:#4f9dcf;letter-spacing:0.842px;">Stopped</div>
<div class="t" style="left:887.86px;top:360.00px;font-size:13.4px;color:#3c3d47;letter-spacing:0.000px;transform:scaleX(1.097);transform-origin:0 50%;">0</div>
<div class="t" style="left:1087.86px;top:360.00px;font-size:13.4px;color:#3c3d47;letter-spacing:0.000px;transform:scaleX(1.097);transform-origin:0 50%;">0</div>
<div class="t" style="left:1226.11px;top:360.00px;font-size:13.4px;color:#3c3d47;letter-spacing:2.669px;">0/0</div>
<div class="t" style="left:1312.08px;top:360.00px;font-size:13.4px;color:#3c3d47;letter-spacing:0.000px;transform:scaleX(1.067);transform-origin:0 50%;">0</div>
<svg class="abs" style="left:1410.20px;top:356.90px" width="19.80" height="19.80" viewBox="-9.90 -9.90 19.80 19.80"><circle r="8.10" fill="none" stroke="#3a9fd0" stroke-width="1.6"/><path d="M-2.42,-3.61 L3.72,0 L-2.42,3.61 Z" fill="#3a9fd0" stroke="#3a9fd0" stroke-width="0.8" stroke-linejoin="round"/></svg>
<div class="hline" style="left:463px;top:390px;width:1003px"></div>
<div class="abs" style="left:468.90px;top:397.70px;width:32.2px;height:32.2px;border-radius:50%;background:#68217a"></div>
<div class="t" style="left:470.55px;top:407.40px;font-size:13.6px;color:rgba(255,255,255,.9);letter-spacing:0.000px;transform:scaleX(0.853);transform-origin:0 50%;">.NET</div>

<div class="t" style="left:513.47px;top:407.00px;font-size:13.4px;color:#3c3d47;letter-spacing:0.508px;">Acme.CloudCrm.AuthServer</div>
<div class="t" style="left:776.80px;top:408.20px;font-size:12.4px;color:#4f9dcf;letter-spacing:0.842px;">Stopped</div>
<div class="t" style="left:887.86px;top:407.00px;font-size:13.4px;color:#3c3d47;letter-spacing:0.000px;transform:scaleX(1.097);transform-origin:0 50%;">0</div>
<div class="t" style="left:1087.86px;top:407.00px;font-size:13.4px;color:#3c3d47;letter-spacing:0.000px;transform:scaleX(1.097);transform-origin:0 50%;">0</div>
<div class="t" style="left:1226.11px;top:407.00px;font-size:13.4px;color:#3c3d47;letter-spacing:2.669px;">0/0</div>
<div class="t" style="left:1312.08px;top:407.00px;font-size:13.4px;color:#3c3d47;letter-spacing:0.000px;transform:scaleX(1.067);transform-origin:0 50%;">0</div>
<svg class="abs" style="left:1410.20px;top:403.90px" width="19.80" height="19.80" viewBox="-9.90 -9.90 19.80 19.80"><circle r="8.10" fill="none" stroke="#3a9fd0" stroke-width="1.6"/><path d="M-2.42,-3.61 L3.72,0 L-2.42,3.61 Z" fill="#3a9fd0" stroke="#3a9fd0" stroke-width="0.8" stroke-linejoin="round"/></svg>
<div class="hline" style="left:463px;top:437px;width:1003px"></div>
<div class="abs" style="left:468.90px;top:444.70px;width:32.2px;height:32.2px;border-radius:50%;background:#68217a"></div>
<div class="t" style="left:470.55px;top:454.40px;font-size:13.6px;color:rgba(255,255,255,.9);letter-spacing:0.000px;transform:scaleX(0.853);transform-origin:0 50%;">.NET</div>

<div class="t" style="left:513.47px;top:454.00px;font-size:13.4px;color:#3c3d47;letter-spacing:0.543px;">Acme.CloudCrm.GdprService</div>
<div class="t" style="left:776.80px;top:455.20px;font-size:12.4px;color:#4f9dcf;letter-spacing:0.842px;">Stopped</div>
<div class="t" style="left:887.86px;top:454.00px;font-size:13.4px;color:#3c3d47;letter-spacing:0.000px;transform:scaleX(1.097);transform-origin:0 50%;">0</div>
<div class="t" style="left:1087.86px;top:454.00px;font-size:13.4px;color:#3c3d47;letter-spacing:0.000px;transform:scaleX(1.097);transform-origin:0 50%;">0</div>
<div class="t" style="left:1226.11px;top:454.00px;font-size:13.4px;color:#3c3d47;letter-spacing:2.669px;">0/0</div>
<div class="t" style="left:1312.08px;top:454.00px;font-size:13.4px;color:#3c3d47;letter-spacing:0.000px;transform:scaleX(1.067);transform-origin:0 50%;">0</div>
<svg class="abs" style="left:1410.20px;top:450.90px" width="19.80" height="19.80" viewBox="-9.90 -9.90 19.80 19.80"><circle r="8.10" fill="none" stroke="#3a9fd0" stroke-width="1.6"/><path d="M-2.42,-3.61 L3.72,0 L-2.42,3.61 Z" fill="#3a9fd0" stroke="#3a9fd0" stroke-width="0.8" stroke-linejoin="round"/></svg>
<div class="hline" style="left:463px;top:484px;width:1003px"></div>
<div class="abs" style="left:468.90px;top:491.70px;width:32.2px;height:32.2px;border-radius:50%;background:#68217a"></div>
<div class="t" style="left:470.55px;top:501.40px;font-size:13.6px;color:rgba(255,255,255,.9);letter-spacing:0.000px;transform:scaleX(0.853);transform-origin:0 50%;">.NET</div>

<div class="t" style="left:513.47px;top:501.00px;font-size:13.4px;color:#3c3d47;letter-spacing:0.575px;">Acme.CloudCrm.IdentityService</div>
<div class="t" style="left:776.80px;top:502.20px;font-size:12.4px;color:#4f9dcf;letter-spacing:0.842px;">Stopped</div>
<div class="t" style="left:887.86px;top:501.00px;font-size:13.4px;color:#3c3d47;letter-spacing:0.000px;transform:scaleX(1.097);transform-origin:0 50%;">0</div>
<div class="t" style="left:1087.86px;top:501.00px;font-size:13.4px;color:#3c3d47;letter-spacing:0.000px;transform:scaleX(1.097);transform-origin:0 50%;">0</div>
<div class="t" style="left:1226.11px;top:501.00px;font-size:13.4px;color:#3c3d47;letter-spacing:2.669px;">0/0</div>
<div class="t" style="left:1312.08px;top:501.00px;font-size:13.4px;color:#3c3d47;letter-spacing:0.000px;transform:scaleX(1.067);transform-origin:0 50%;">0</div>
<svg class="abs" style="left:1410.20px;top:497.90px" width="19.80" height="19.80" viewBox="-9.90 -9.90 19.80 19.80"><circle r="8.10" fill="none" stroke="#3a9fd0" stroke-width="1.6"/><path d="M-2.42,-3.61 L3.72,0 L-2.42,3.61 Z" fill="#3a9fd0" stroke="#3a9fd0" stroke-width="0.8" stroke-linejoin="round"/></svg>
<div class="hline" style="left:463px;top:531px;width:1003px"></div>
<div class="abs" style="left:468.90px;top:538.70px;width:32.2px;height:32.2px;border-radius:50%;background:#68217a"></div>
<div class="t" style="left:470.55px;top:548.40px;font-size:13.6px;color:rgba(255,255,255,.9);letter-spacing:0.000px;transform:scaleX(0.853);transform-origin:0 50%;">.NET</div>

<div class="t" style="left:513.47px;top:548.00px;font-size:13.4px;color:#3c3d47;letter-spacing:0.633px;">Acme.CloudCrm.Maui</div>
<div class="t" style="left:776.80px;top:549.20px;font-size:12.4px;color:#4f9dcf;letter-spacing:0.842px;">Stopped</div>
<div class="t" style="left:887.86px;top:548.00px;font-size:13.4px;color:#3c3d47;letter-spacing:0.000px;transform:scaleX(1.097);transform-origin:0 50%;">0</div>
<div class="t" style="left:1087.86px;top:548.00px;font-size:13.4px;color:#3c3d47;letter-spacing:0.000px;transform:scaleX(1.097);transform-origin:0 50%;">0</div>
<div class="t" style="left:1226.11px;top:548.00px;font-size:13.4px;color:#3c3d47;letter-spacing:2.669px;">0/0</div>
<div class="t" style="left:1312.08px;top:548.00px;font-size:13.4px;color:#3c3d47;letter-spacing:0.000px;transform:scaleX(1.067);transform-origin:0 50%;">0</div>
<svg class="abs" style="left:1410.20px;top:544.90px" width="19.80" height="19.80" viewBox="-9.90 -9.90 19.80 19.80"><circle r="8.10" fill="none" stroke="#3a9fd0" stroke-width="1.6"/><path d="M-2.42,-3.61 L3.72,0 L-2.42,3.61 Z" fill="#3a9fd0" stroke="#3a9fd0" stroke-width="0.8" stroke-linejoin="round"/></svg>
<div class="hline" style="left:463px;top:578px;width:1003px"></div>
<div class="abs" style="left:468.90px;top:585.70px;width:32.2px;height:32.2px;border-radius:50%;background:#68217a"></div>
<div class="t" style="left:470.55px;top:595.40px;font-size:13.6px;color:rgba(255,255,255,.9);letter-spacing:0.000px;transform:scaleX(0.853);transform-origin:0 50%;">.NET</div>

<div class="t" style="left:513.47px;top:595.00px;font-size:13.4px;color:#3c3d47;letter-spacing:0.666px;">Acme.CloudCrm.MobileGateway</div>
<div class="t" style="left:776.80px;top:596.20px;font-size:12.4px;color:#4f9dcf;letter-spacing:0.842px;">Stopped</div>
<div class="t" style="left:887.86px;top:595.00px;font-size:13.4px;color:#3c3d47;letter-spacing:0.000px;transform:scaleX(1.097);transform-origin:0 50%;">0</div>
<div class="t" style="left:1087.86px;top:595.00px;font-size:13.4px;color:#3c3d47;letter-spacing:0.000px;transform:scaleX(1.097);transform-origin:0 50%;">0</div>
<div class="t" style="left:1226.11px;top:595.00px;font-size:13.4px;color:#3c3d47;letter-spacing:2.669px;">0/0</div>
<div class="t" style="left:1312.08px;top:595.00px;font-size:13.4px;color:#3c3d47;letter-spacing:0.000px;transform:scaleX(1.067);transform-origin:0 50%;">0</div>
<svg class="abs" style="left:1410.20px;top:591.90px" width="19.80" height="19.80" viewBox="-9.90 -9.90 19.80 19.80"><circle r="8.10" fill="none" stroke="#3a9fd0" stroke-width="1.6"/><path d="M-2.42,-3.61 L3.72,0 L-2.42,3.61 Z" fill="#3a9fd0" stroke="#3a9fd0" stroke-width="0.8" stroke-linejoin="round"/></svg>
<div class="hline" style="left:463px;top:625px;width:1003px"></div>
<div class="abs" style="left:468.90px;top:632.70px;width:32.2px;height:32.2px;border-radius:50%;background:#68217a"></div>
<div class="t" style="left:470.55px;top:642.40px;font-size:13.6px;color:rgba(255,255,255,.9);letter-spacing:0.000px;transform:scaleX(0.853);transform-origin:0 50%;">.NET</div>

<div class="t" style="left:513.47px;top:642.00px;font-size:13.4px;color:#3c3d47;letter-spacing:0.499px;">Acme.CloudCrm.SaasService</div>
<div class="t" style="left:776.80px;top:643.20px;font-size:12.4px;color:#4f9dcf;letter-spacing:0.842px;">Stopped</div>
<div class="t" style="left:887.86px;top:642.00px;font-size:13.4px;color:#3c3d47;letter-spacing:0.000px;transform:scaleX(1.097);transform-origin:0 50%;">0</div>
<div class="t" style="left:1087.86px;top:642.00px;font-size:13.4px;color:#3c3d47;letter-spacing:0.000px;transform:scaleX(1.097);transform-origin:0 50%;">0</div>
<div class="t" style="left:1226.11px;top:642.00px;font-size:13.4px;color:#3c3d47;letter-spacing:2.669px;">0/0</div>
<div class="t" style="left:1312.08px;top:642.00px;font-size:13.4px;color:#3c3d47;letter-spacing:0.000px;transform:scaleX(1.067);transform-origin:0 50%;">0</div>
<svg class="abs" style="left:1410.20px;top:638.90px" width="19.80" height="19.80" viewBox="-9.90 -9.90 19.80 19.80"><circle r="8.10" fill="none" stroke="#3a9fd0" stroke-width="1.6"/><path d="M-2.42,-3.61 L3.72,0 L-2.42,3.61 Z" fill="#3a9fd0" stroke="#3a9fd0" stroke-width="0.8" stroke-linejoin="round"/></svg>
<div class="hline" style="left:463px;top:672px;width:1003px"></div>
<div class="abs" style="left:468.90px;top:679.70px;width:32.2px;height:32.2px;border-radius:50%;background:#68217a"></div>
<div class="t" style="left:470.55px;top:689.40px;font-size:13.6px;color:rgba(255,255,255,.9);letter-spacing:0.000px;transform:scaleX(0.853);transform-origin:0 50%;">.NET</div>

<div class="t" style="left:513.47px;top:689.00px;font-size:13.4px;color:#3c3d47;letter-spacing:0.671px;">Acme.CloudCrm.Web</div>
<div class="t" style="left:776.80px;top:690.20px;font-size:12.4px;color:#4f9dcf;letter-spacing:0.842px;">Stopped</div>
<div class="t" style="left:887.86px;top:689.00px;font-size:13.4px;color:#3c3d47;letter-spacing:0.000px;transform:scaleX(1.097);transform-origin:0 50%;">0</div>
<div class="t" style="left:1087.86px;top:689.00px;font-size:13.4px;color:#3c3d47;letter-spacing:0.000px;transform:scaleX(1.097);transform-origin:0 50%;">0</div>
<div class="t" style="left:1226.11px;top:689.00px;font-size:13.4px;color:#3c3d47;letter-spacing:2.669px;">0/0</div>
<div class="t" style="left:1312.08px;top:689.00px;font-size:13.4px;color:#3c3d47;letter-spacing:0.000px;transform:scaleX(1.067);transform-origin:0 50%;">0</div>
<svg class="abs" style="left:1410.20px;top:685.90px" width="19.80" height="19.80" viewBox="-9.90 -9.90 19.80 19.80"><circle r="8.10" fill="none" stroke="#3a9fd0" stroke-width="1.6"/><path d="M-2.42,-3.61 L3.72,0 L-2.42,3.61 Z" fill="#3a9fd0" stroke="#3a9fd0" stroke-width="0.8" stroke-linejoin="round"/></svg>
<div class="hline" style="left:463px;top:719px;width:1003px"></div>
<div class="abs" style="left:468.90px;top:726.70px;width:32.2px;height:32.2px;border-radius:50%;background:#68217a"></div>
<div class="t" style="left:470.55px;top:736.40px;font-size:13.6px;color:rgba(255,255,255,.9);letter-spacing:0.000px;transform:scaleX(0.853);transform-origin:0 50%;">.NET</div>

<div class="t" style="left:513.47px;top:736.00px;font-size:13.4px;color:#3c3d47;letter-spacing:0.666px;">Acme.CloudCrm.WebGateway</div>
<div class="t" style="left:776.80px;top:737.20px;font-size:12.4px;color:#4f9dcf;letter-spacing:0.842px;">Stopped</div>
<div class="t" style="left:887.86px;top:736.00px;font-size:13.4px;color:#3c3d47;letter-spacing:0.000px;transform:scaleX(1.097);transform-origin:0 50%;">0</div>
<div class="t" style="left:1087.86px;top:736.00px;font-size:13.4px;color:#3c3d47;letter-spacing:0.000px;transform:scaleX(1.097);transform-origin:0 50%;">0</div>
<div class="t" style="left:1226.11px;top:736.00px;font-size:13.4px;color:#3c3d47;letter-spacing:2.669px;">0/0</div>
<div class="t" style="left:1312.08px;top:736.00px;font-size:13.4px;color:#3c3d47;letter-spacing:0.000px;transform:scaleX(1.067);transform-origin:0 50%;">0</div>
<svg class="abs" style="left:1410.20px;top:732.90px" width="19.80" height="19.80" viewBox="-9.90 -9.90 19.80 19.80"><circle r="8.10" fill="none" stroke="#3a9fd0" stroke-width="1.6"/><path d="M-2.42,-3.61 L3.72,0 L-2.42,3.61 Z" fill="#3a9fd0" stroke="#3a9fd0" stroke-width="0.8" stroke-linejoin="round"/></svg>
<div class="hline" style="left:463px;top:766px;width:1003px"></div>
<div class="panel" style="left:443px;top:793px;width:1043px;height:122px"></div>
<div class="tabline" style="left:452px;top:829px;width:160px;background:#2f97cc"></div>
<div class="t" style="left:484.31px;top:805.00px;font-size:13.4px;color:#2f3039;letter-spacing:0.649px;">Background Tasks</div>
<div class="tabline" style="left:614px;top:829px;width:123px;"></div>
<div class="t" style="left:646.79px;top:805.00px;font-size:13.4px;color:#8a8a97;letter-spacing:0.646px;">Notifications</div>
<div class="tabline" style="left:739px;top:829px;width:71px;"></div>
<div class="t" style="left:771.51px;top:805.00px;font-size:13.4px;color:#8a8a97;letter-spacing:0.346px;">Logs</div>
<svg class="abs" style="left:460.1px;top:807.4px" width="13.3" height="10.6" viewBox="0 0 14 11.7"><rect x="0" y="0.5" width="14" height="4.6" rx="1.2" fill="#2f97cc"/><rect x="0" y="6.6" width="14" height="4.6" rx="1.2" fill="#2f97cc"/><path d="M8.5,2.8 h3 M8.5,8.9 h3" stroke="#fff" stroke-width="1.1" stroke-linecap="round"/></svg>
<svg class="abs" style="left:621.7px;top:805px" width="14" height="15" viewBox="0 0 14 15"><path d="M7,0.8 a1,1 0 0 1 1,1 v0.4 a4.2,4.2 0 0 1 3.3,4.1 v2.6 l1.5,2 v0.8 h-11.6 v-0.8 l1.5,-2 v-2.6 a4.2,4.2 0 0 1 3.3,-4.1 v-0.4 a1,1 0 0 1 1,-1 z M5.4,12.6 h3.2 a1.6,1.6 0 0 1 -3.2,0 z" fill="#84868b"/></svg>
<svg class="abs" style="left:746.4px;top:806.4px" width="14" height="12" viewBox="0 0 14 12"><g stroke="#7e7f88" stroke-width="1.4" stroke-linecap="round"><path d="M1.6,1.9 H12.4 M1,6 H13.2 M1.2,10.1 H12"/></g></svg>
<div class="btn" style="left:451.7px;top:837.2px;width:28.7px;height:29.1px;border-radius:7px;background:#e9e9ec"></div>
<div class="btn" style="left:451.7px;top:871.5px;width:28.7px;height:29.1px;border-radius:7px;background:#e9e9ec"></div>
<svg class="abs" style="left:459px;top:845px" width="14" height="14" viewBox="-7 -7 14 14"><circle r="5.5" fill="none" stroke="#e8929f" stroke-width="1.5"/><path d="M-3.9,-3.9 L3.9,3.9" stroke="#e8929f" stroke-width="1.5"/></svg>
<svg class="abs" style="left:460px;top:879px" width="12" height="14" viewBox="0 0 12 14"><path d="M4,0.8 h4 l0.6,1 h2.6 v1.6 h-10.4 v-1.6 h2.6 z M1.6,4.4 h8.8 l-0.6,8 a0.9,0.9 0 0 1 -0.9,0.8 h-5.8 a0.9,0.9 0 0 1 -0.9,-0.8 z" fill="#b8b8bb"/></svg>
<div class="t" style="left:500.74px;top:844.70px;font-size:13.4px;color:#8a8a97;letter-spacing:0.780px;">Queue time</div>
<div class="t" style="left:628.34px;top:844.70px;font-size:13.4px;color:#8a8a97;letter-spacing:0.660px;">Task description</div>
<div class="t" style="left:1135.41px;top:844.70px;font-size:13.4px;color:#8a8a97;letter-spacing:0.780px;">Duration</div>
<div class="t" style="left:1262.76px;top:844.70px;font-size:13.4px;color:#8a8a97;letter-spacing:0.597px;">Status</div>
<div class="t" style="left:1390.27px;top:844.70px;font-size:13.4px;color:#8a8a97;letter-spacing:0.562px;">Actions</div>
<div class="hline" style="left:489px;top:866px;width:989px;background:#dcdde0"></div>
<div class="t" style="left:18.49px;top:924.10px;font-size:12.4px;color:#6d6d7c;letter-spacing:0.221px;">Ready...</div>
</div></div>
</body></html>
